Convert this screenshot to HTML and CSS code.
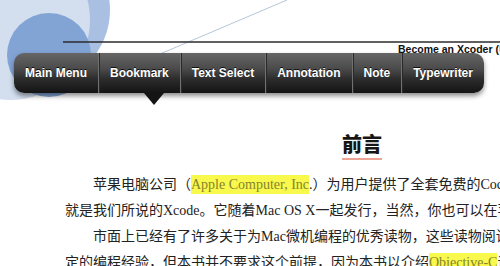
FILE: index.html
```html
<!DOCTYPE html>
<html lang="zh-CN">
<head>
  <meta charset="UTF-8">
  <title>Become an Xcoder - 前言</title>
  <link rel="stylesheet" href="styles.css">
</head>
<body>
  <div class="page">
    <header class="doc-head">
      <svg class="head-art" width="500" height="120" viewBox="0 0 500 120">
        <circle cx="35" cy="10" r="75" fill="#a9c0e2"/>
        <circle cx="10" cy="20" r="80" fill="#d3deef"/>
        <circle cx="49" cy="55" r="42" fill="#82a4d5"/>
        <line x1="160" y1="54" x2="287" y2="0" stroke="#b5c6d9" stroke-width="1"/>
        <line x1="63" y1="42" x2="500" y2="42" stroke="#2b2b2b" stroke-width="1.4"/>
      </svg>
      <p class="running-title">Become an Xcoder (中文版)</p>
    </header>

    <article class="doc">
      <h1><span class="title">前言</span></h1>
      <p class="para">苹果电脑公司（<mark>Apple Computer, Inc</mark>.）为用户提供了全套免费的Cocoa开发工具，也<br>就是我们所说的Xcode。它随着Mac OS X一起发行，当然，你也可以在苹果公司网站下载。</p>
      <p class="para">市面上已经有了许多关于为Mac微机编程的优秀读物，这些读物阅读起来都需要读者具备一<br>定的编程经验，但本书并不要求这个前提，因为本书以介绍<mark>Objective-C</mark>语言开始。</p>
    </article>

    <nav class="toolbar">
      <a href="#">Main Menu</a>
      <a href="#">Bookmark</a>
      <a href="#">Text Select</a>
      <a href="#">Annotation</a>
      <a href="#">Note</a>
      <a href="#">Typewriter</a>
    </nav>
  </div>
</body>
</html>
```

FILE: styles.css
```css
/* Page */
body { margin: 0; background-color: #fff; overflow: hidden; }
.page { position: relative; width: 500px; height: 266px; overflow: hidden; }

/* Running head with the blue circles */
.doc-head { position: relative; height: 57px; }
.head-art { position: absolute; left: 0; top: 0; }
.running-title {
  position: relative; margin: 0; padding: 43px 0 0 398px;
  font: bold 10.5px/12px 'Liberation Sans', Arial, sans-serif;
  color: #111; white-space: nowrap;
}

/* Document text */
.doc {
  margin-left: 65px; width: 594px;
  font-family: 'Liberation Serif', 'Noto Sans CJK SC', serif;
  color: #222;
}
.doc h1 {
  margin: 75px 0 16px; text-align: center;
  font: 900 20px/24px 'Noto Sans CJK SC', sans-serif; color: #151515;
}
.title {
  text-decoration: underline; text-decoration-color: #eaa595;
  text-decoration-thickness: 2px; text-underline-offset: 6px;
}
.para {
  margin: 0; font-size: 14px; line-height: 26px;
  text-indent: 2em; white-space: nowrap;
}
mark { background-color: #f9f84c; color: #86842c; padding: 2px 0; }

/* Floating reader toolbar */
.toolbar {
  position: absolute; top: 53px; left: 14px;
  display: flex; height: 40px;
  border-radius: 10px;
  background: linear-gradient(to bottom, #666 0%, #4a4a4a 40%, #2c2c2c 65%, #141414 100%);
  box-shadow: 0 3px 5px rgba(0, 0, 0, 0.45);
}
.toolbar::after {
  content: ""; position: absolute; left: 130px; top: 40px;
  border-left: 10px solid transparent; border-right: 10px solid transparent;
  border-top: 12px solid #141414;
}
.toolbar a {
  display: flex; align-items: center; padding: 0 11px;
  font: bold 12px 'Liberation Sans', Arial, sans-serif;
  color: #fff; text-decoration: none;
  text-shadow: 0 -1px 0 rgba(0, 0, 0, 0.8);
}
.toolbar a + a { border-left: 1px solid #707070; box-shadow: inset 1px 0 0 #2a2a2a; }
```
